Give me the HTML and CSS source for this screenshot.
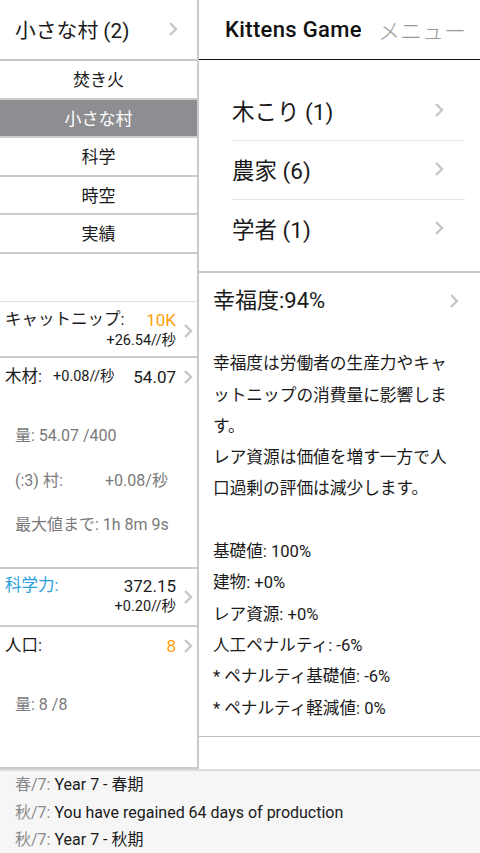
FILE: index.html
```html
<!DOCTYPE html>
<html lang="ja">
<head>
<meta charset="utf-8">
<title>Kittens Game</title>
<link rel="stylesheet" href="styles.css">
</head>
<body>
<div class="app">
  <div class="main">
    <aside class="left">
      <div class="lhead">
        <span class="lhead-title">小さな村 (2)</span>
        <svg class="chev" viewBox="0 0 10 16" width="10" height="16"><polyline points="2,2 8,8 2,14"/></svg>
      </div>
      <nav class="tabs">
        <div class="tab">焚き火</div>
        <div class="tab active">小さな村</div>
        <div class="tab">科学</div>
        <div class="tab">時空</div>
        <div class="tab">実績</div>
      </nav>
      <div class="resources">
        <div class="res res-catnip">
          <div class="res-line"><span class="res-name">キャットニップ:</span><span class="res-val orange">10K</span></div>
          <div class="res-rate">+26.54//秒</div>
          <div class="res-chev mid"><svg class="chev" viewBox="0 0 10 16" width="10" height="16"><polyline points="2,2 8,8 2,14"/></svg></div>
        </div>
        <div class="res res-wood">
          <div class="res-line"><span class="res-name">木材:</span><span class="res-inline-rate">+0.08//秒</span><span class="res-val">54.07</span></div>
          <div class="res-chev top"><svg class="chev" viewBox="0 0 10 16" width="10" height="16"><polyline points="2,2 8,8 2,14"/></svg></div>
          <div class="res-details">
            <div class="detail">量: 54.07 /400</div>
            <div class="detail"><span class="detail-label">(:3) 村:</span><span>+0.08/秒</span></div>
            <div class="detail">最大値まで: 1h 8m 9s</div>
          </div>
        </div>
        <div class="res res-science">
          <div class="res-line"><span class="res-name blue">科学力:</span><span class="res-val">372.15</span></div>
          <div class="res-rate">+0.20//秒</div>
          <div class="res-chev mid"><svg class="chev" viewBox="0 0 10 16" width="10" height="16"><polyline points="2,2 8,8 2,14"/></svg></div>
        </div>
        <div class="res res-pop">
          <div class="res-line"><span class="res-name">人口:</span><span class="res-val orange">8</span></div>
          <div class="res-chev top"><svg class="chev" viewBox="0 0 10 16" width="10" height="16"><polyline points="2,2 8,8 2,14"/></svg></div>
          <div class="res-details">
            <div class="detail">量: 8 /8</div>
          </div>
        </div>
      </div>
    </aside>
    <section class="right">
      <header class="rhead">
        <span class="brand">Kittens Game</span>
        <span class="menu">メニュー</span>
      </header>
      <div class="jobs">
        <div class="job"><span>木こり (1)</span><svg class="chev" viewBox="0 0 10 16" width="10" height="16"><polyline points="2,2 8,8 2,14"/></svg></div>
        <div class="job"><span>農家 (6)</span><svg class="chev" viewBox="0 0 10 16" width="10" height="16"><polyline points="2,2 8,8 2,14"/></svg></div>
        <div class="job"><span>学者 (1)</span><svg class="chev" viewBox="0 0 10 16" width="10" height="16"><polyline points="2,2 8,8 2,14"/></svg></div>
      </div>
      <div class="happy">
        <div class="happy-head"><span>幸福度:94%</span><svg class="chev" viewBox="0 0 10 16" width="10" height="16"><polyline points="2,2 8,8 2,14"/></svg></div>
        <p class="happy-desc">幸福度は労働者の生産力やキャ<br>ットニップの消費量に影響しま<br>す。<br>レア資源は価値を増す一方で人<br>口過剰の評価は減少します。</p>
        <ul class="happy-stats">
          <li>基礎値: 100%</li>
          <li>建物: +0%</li>
          <li>レア資源: +0%</li>
          <li>人工ペナルティ: -6%</li>
          <li>* ペナルティ基礎値: -6%</li>
          <li>* ペナルティ軽減値: 0%</li>
        </ul>
      </div>
    </section>
  </div>
  <footer class="log">
    <div class="log-line"><span class="log-date">春/7:</span> Year 7 - 春期</div>
    <div class="log-line"><span class="log-date">秋/7:</span> You have regained 64 days of production</div>
    <div class="log-line"><span class="log-date">秋/7:</span> Year 7 - 秋期</div>
  </footer>
</div>
</body>
</html>
```

FILE: styles.css
```css
* { box-sizing: border-box; }

html, body {
  margin: 0;
  padding: 0;
  background: #fff;
}

body {
  font-family: Roboto, "Noto Sans CJK JP", sans-serif;
  color: #1a1a1a;
  width: 480px;
  height: 853px;
  overflow: hidden;
}

.app {
  display: flex;
  flex-direction: column;
  height: 853px;
}

.main {
  display: flex;
  height: 769px;
  flex: none;
}

.chev {
  fill: none;
  stroke: #c6c6c6;
  stroke-width: 2.4;
  stroke-linecap: butt;
  stroke-linejoin: miter;
  flex: none;
}

/* ---------- left panel ---------- */
.left {
  width: 199px;
  flex: none;
  border-right: 2px solid #c9c9c9;
  display: flex;
  flex-direction: column;
}

.lhead {
  height: 61px;
  border-bottom: 2px solid #c8c8c8;
  display: flex;
  align-items: center;
  padding: 0 19px 2px 15px;
  font-size: 20.8px;
}

.lhead-title { flex: 1; }

.tabs { display: flex; flex-direction: column; }

.tab {
  height: 38.5px;
  border-bottom: 2px solid #cbcbcb;
  display: flex;
  align-items: center;
  justify-content: center;
  font-size: 17px;
  padding-bottom: 1px;
}

.tab.active {
  background: #8e8e92;
  color: #fff;
}

.resources {
  margin-top: 47.5px;
  border-top: 1px solid #e2e2e2;
  flex: 1;
  display: flex;
  flex-direction: column;
}

.res {
  display: grid;
  grid-template-columns: 1fr 21px;
  align-content: start;
  padding-left: 5px;
  border-bottom: 2px solid #cbcbcb;
}

.res-line {
  grid-column: 1;
  grid-row: 1;
  display: flex;
  align-items: center;
  line-height: 20px;
  font-size: 16.5px;
}

.res-name { flex: none; }
.res-inline-rate { font-size: 14.5px; margin-left: 11px; }
.res-val { margin-left: auto; font-size: 17px; }

.res-rate {
  grid-column: 1;
  grid-row: 2;
  text-align: right;
  font-size: 14.5px;
  line-height: 22px;
}

.res-chev {
  grid-column: 2;
  display: flex;
  justify-content: center;
  align-items: center;
  padding-left: 2px;
}

.res-chev.mid { grid-row: 1 / span 2; }
.res-chev.top { grid-row: 1; }

.res-catnip { padding-top: 8px; padding-bottom: 4px; }
.res-science { padding-top: 7px; padding-bottom: 7px; }
.res-wood { padding-top: 9px; padding-bottom: 18.75px; }
.res-pop { padding-top: 9px; flex: 1; }

.orange { color: #fda20e; }
.blue { color: #2a9fdc; }

.res-details {
  grid-column: 1 / span 2;
  grid-row: 2;
  padding: 27.25px 0 0 10px;
  color: #7a7a7a;
  font-size: 16px;
}

.detail {
  line-height: 44.5px;
  display: flex;
}

.detail-label { width: 90px; flex: none; }

/* ---------- right panel ---------- */
.right {
  flex: 1;
  display: flex;
  flex-direction: column;
}

.rhead {
  height: 60px;
  border-bottom: 1px solid #111;
  display: flex;
  align-items: center;
  padding: 0 14px 1px 26px;
}

.brand {
  font-size: 22px;
  font-weight: 500;
  letter-spacing: 0.35px;
  color: #111;
}

.menu {
  margin-left: auto;
  font-size: 22px;
  color: #9b9b9b;
  font-weight: 300;
}

.jobs {
  padding: 21px 15px 13px 33px;
  border-bottom: 2px solid #c8c8c8;
}

.job {
  height: 59px;
  display: flex;
  align-items: center;
  justify-content: space-between;
  padding-right: 21px;
  padding-bottom: 2px;
  font-size: 22.5px;
  border-top: 1px solid #e4e4e4;
}

.job:first-child { border-top: none; }

.happy {
  padding: 12px 21px 12.5px 14px;
  border-bottom: 1px solid #bdbdbd;
}

.happy-head {
  display: flex;
  align-items: center;
  justify-content: space-between;
  line-height: 32px;
  font-size: 22px;
}

.happy-desc {
  margin: 31.3px 0 0;
  font-size: 16.7px;
  line-height: 31.3px;
}

.happy-stats {
  list-style: none;
  margin: 31.3px 0 0;
  padding: 0;
  font-size: 16.6px;
  line-height: 31.3px;
}

/* ---------- log ---------- */
.log {
  height: 84px;
  flex: none;
  background: #f6f6f6;
  border-top: 2px solid #dcdcdc;
  padding-left: 15px;
  font-size: 16px;
}

.log-line {
  line-height: 27.5px;
  white-space: nowrap;
}

.log-date { color: #8a8a8a; }
```
